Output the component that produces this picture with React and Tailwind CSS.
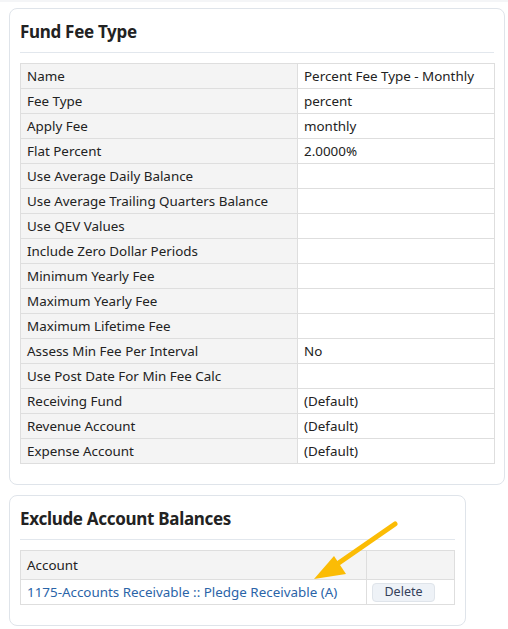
import React from "react";

const rows = [
  ["Name", "Percent Fee Type - Monthly"],
  ["Fee Type", "percent"],
  ["Apply Fee", "monthly"],
  ["Flat Percent", "2.0000%"],
  ["Use Average Daily Balance", ""],
  ["Use Average Trailing Quarters Balance", ""],
  ["Use QEV Values", ""],
  ["Include Zero Dollar Periods", ""],
  ["Minimum Yearly Fee", ""],
  ["Maximum Yearly Fee", ""],
  ["Maximum Lifetime Fee", ""],
  ["Assess Min Fee Per Interval", "No"],
  ["Use Post Date For Min Fee Calc", ""],
  ["Receiving Fund", "(Default)"],
  ["Revenue Account", "(Default)"],
  ["Expense Account", "(Default)"],
];

export default function App() {
  return (
    <div className="relative w-[508px] h-[629px] bg-white text-[#212529] overflow-hidden" style={{ fontFamily: '"Noto Sans", "Open Sans", sans-serif' }}>
      <div className="h-[2px] bg-[#f4f5f7]" />
      <div className="pl-[9px] pr-[3px] pt-[6px]">
        <div className="border border-[#dfe4ea] rounded-[8px] px-[10px] pt-[11px] pb-[20px]">
          <h2 className="text-[17px] tracking-[-0.3px] font-bold leading-[24px] text-[#222] pb-[8px] border-b border-[#e2e7ed] mb-[10px]">Fund Fee Type</h2>
          <table className="w-[475px] border-collapse text-[13.4px] leading-[16px]">
            <tbody>
              {rows.map(([k, v]) => (
                <tr key={k} className="h-[25px]">
                  <td className="w-[277px] bg-[#f4f4f4] border border-[#dedede] px-[6px] py-0 text-[#222]">{k}</td>
                  <td className="border border-[#dedede] px-[6px] py-0 text-[#222]">{v}</td>
                </tr>
              ))}
            </tbody>
          </table>
        </div>
      </div>
      <div className="pl-[9px] pt-[10px]">
        <div className="w-[457px] border border-[#dfe4ea] rounded-[8px] px-[10px] pt-[11px] pb-[20px]">
          <h2 className="text-[17px] tracking-[-0.3px] font-bold leading-[24px] text-[#222] pb-[8px] border-b border-[#e2e7ed] mb-[10px]">Exclude Account Balances</h2>
          <table className="w-[435px] border-collapse text-[13.4px] leading-[16px]">
            <thead>
              <tr className="h-[29px] bg-[#f4f4f4]">
                <th className="text-left font-normal border border-[#dedede] px-[6px] text-[#222]">Account</th>
                <th className="w-[88px] border border-[#dedede]"></th>
              </tr>
            </thead>
            <tbody>
              <tr className="h-[25px]">
                <td className="border border-[#dedede] px-[6px] text-[#2a64a8]">1175-Accounts Receivable :: Pledge Receivable (A)</td>
                <td className="border border-[#dedede] px-[5px]">
                  <button className="w-[63px] h-[19px] rounded-[4px] border border-[#dfe4ea] bg-[#eef2f7] text-[12.5px] leading-[16px] text-[#34405a]">Delete</button>
                </td>
              </tr>
            </tbody>
          </table>
        </div>
      </div>
      <svg className="absolute left-0 top-0 pointer-events-none" width="508" height="629">
        <line x1="395" y1="524" x2="330" y2="569" stroke="#fbbc05" strokeWidth="5" strokeLinecap="round" />
        <polygon points="314,579 334,556 346,574" fill="#fbbc05" />
      </svg>
    </div>
  );
}
